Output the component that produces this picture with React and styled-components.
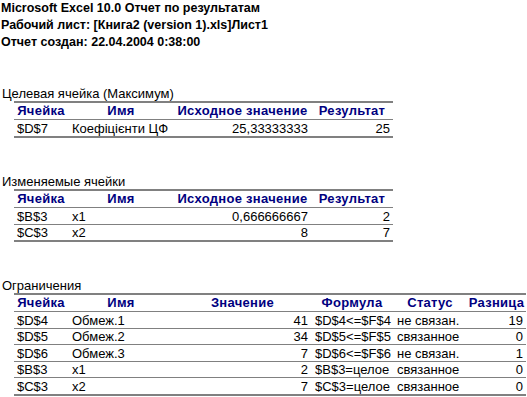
import React from "react";
import styled, { createGlobalStyle } from "styled-components";

const GlobalStyle = createGlobalStyle`
  html, body {
    margin: 0;
    padding: 0;
    background: #ffffff;
  }
  body {
    font-family: "Liberation Sans", Arial, sans-serif;
    color: #000000;
  }
`;

const target = [
  { cell: "$D$7", name: "Коефіцієнти ЦФ", start: "25,33333333", result: "25" },
];

const changing = [
  { cell: "$B$3", name: "x1", start: "0,666666667", result: "2" },
  { cell: "$C$3", name: "x2", start: "8", result: "7" },
];

const constraints = [
  { cell: "$D$4", name: "Обмеж.1", value: "41", formula: "$D$4<=$F$4", status: "не связан.", slack: "19" },
  { cell: "$D$5", name: "Обмеж.2", value: "34", formula: "$D$5<=$F$5", status: "связанное", slack: "0" },
  { cell: "$D$6", name: "Обмеж.3", value: "7", formula: "$D$6<=$F$6", status: "не связан.", slack: "1" },
  { cell: "$B$3", name: "x1", value: "2", formula: "$B$3=целое", status: "связанное", slack: "0" },
  { cell: "$C$3", name: "x2", value: "7", formula: "$C$3=целое", status: "связанное", slack: "0" },
];

// same sheet columns B..G for every block
const COLS = [54, 106, 137, 82, 74, 59];

const Cols = ({ count }) => (
  <colgroup>
    {COLS.slice(0, count).map((w, i) => (
      <col key={i} style={{ width: w }} />
    ))}
  </colgroup>
);

const tableWidth = (count) => COLS.slice(0, count).reduce((a, b) => a + b, 0);

const CellTable = ({ rows }) => (
  <Table $width={tableWidth(4)}>
    <Cols count={4} />
    <thead>
      <tr>
        <Th>Ячейка</Th>
        <Th>Имя</Th>
        <Th>Исходное значение</Th>
        <Th>Результат</Th>
      </tr>
    </thead>
    <tbody>
      {rows.map((r) => (
        <Row key={r.cell}>
          <Td>{r.cell}</Td>
          <Td>{r.name}</Td>
          <Td $right>{r.start}</Td>
          <Td $right>{r.result}</Td>
        </Row>
      ))}
    </tbody>
  </Table>
);

const App = () => {
  return (
    <>
      <GlobalStyle />
      <Sheet>
        <Header>
          <TitleLine>Microsoft Excel 10.0 Отчет по результатам</TitleLine>
          <TitleLine>Рабочий лист: [Книга2 (version 1).xls]Лист1</TitleLine>
          <TitleLine>Отчет создан: 22.04.2004 0:38:00</TitleLine>
        </Header>

        <Section $top={35}>
          <Caption>Целевая ячейка (Максимум)</Caption>
          <CellTable rows={target} />
        </Section>

        <Section $top={36}>
          <Caption>Изменяемые ячейки</Caption>
          <CellTable rows={changing} />
        </Section>

        <Section $top={36}>
          <Caption>Ограничения</Caption>
          <Table $width={tableWidth(6)}>
            <Cols count={6} />
            <thead>
              <tr>
                <Th>Ячейка</Th>
                <Th>Имя</Th>
                <Th>Значение</Th>
                <Th>Формула</Th>
                <Th>Статус</Th>
                <Th>Разница</Th>
              </tr>
            </thead>
            <tbody>
              {constraints.map((r, i) => (
                <Row key={i}>
                  <Td>{r.cell}</Td>
                  <Td>{r.name}</Td>
                  <Td $right>{r.value}</Td>
                  <Td>{r.formula}</Td>
                  <Td>{r.status}</Td>
                  <Td $right>{r.slack}</Td>
                </Row>
              ))}
            </tbody>
          </Table>
        </Section>
      </Sheet>
    </>
  );
};

export default App;

const Sheet = styled.div`
  width: 527px;
  height: 397px;
  overflow: hidden;
  background: #ffffff;
`;

const Header = styled.div`
  display: flex;
  flex-direction: column;
  padding-left: 1px;
`;

const TitleLine = styled.div`
  height: 17px;
  line-height: 17px;
  font-size: 12.5px;
  font-weight: bold;
  white-space: nowrap;
`;

const Section = styled.div`
  margin-top: ${(p) => p.$top}px;
`;

const Caption = styled.div`
  height: 15px;
  line-height: 15px;
  padding-left: 2px;
  font-size: 13px;
  white-space: nowrap;
`;

const Table = styled.table`
  margin-left: 14px;
  width: ${(p) => p.$width}px;
  table-layout: fixed;
  border-collapse: collapse;
  border-top: 2px solid #808080;
  border-bottom: 2px solid #808080;
  font-size: 13px;
`;

const Th = styled.th`
  height: 16px;
  padding: 0;
  line-height: 16px;
  text-align: center;
  color: #000080;
  font-size: 13px;
  font-weight: bold;
  letter-spacing: 0.3px;
  white-space: nowrap;
  border-bottom: 1px solid #808080;
`;

const Row = styled.tr`
  &:not(:last-child) td {
    border-bottom: 1px solid #808080;
  }
  &:nth-child(even) td {
    height: 15px;
  }
`;

const Td = styled.td`
  height: 16px;
  padding: 0 3px 0 4px;
  line-height: 15px;
  text-align: ${(p) => (p.$right ? "right" : "left")};
  white-space: nowrap;
  overflow: hidden;
  &:first-child {
    padding-left: 3px;
  }
`;
